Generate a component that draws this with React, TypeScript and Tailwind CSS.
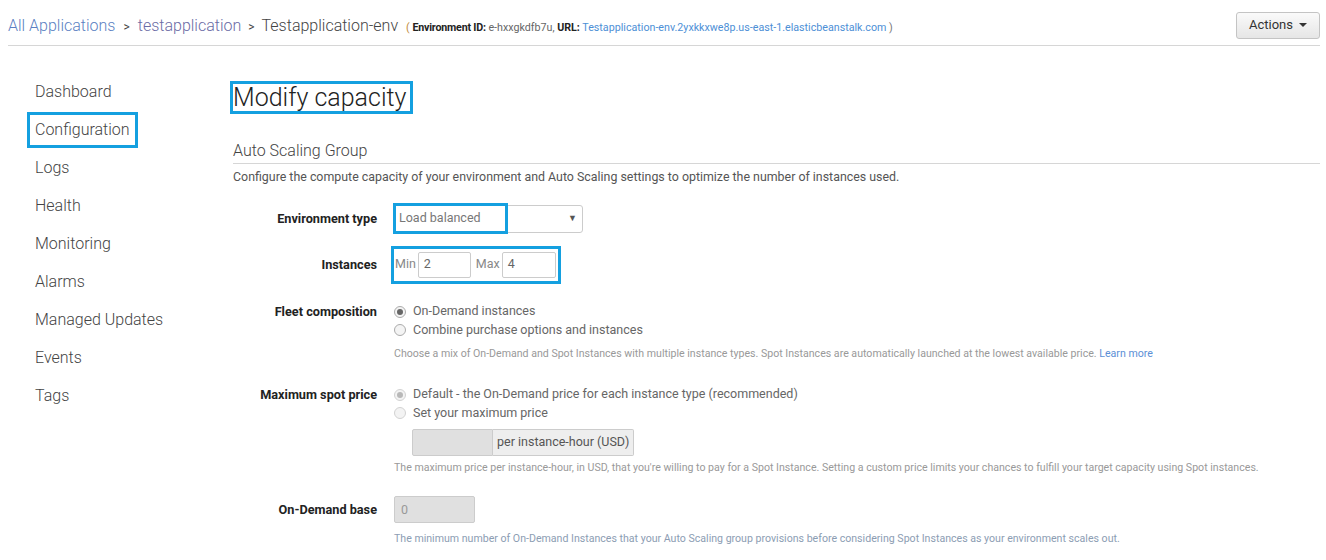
import React from "react";

const font = { fontFamily: "Roboto, 'Liberation Sans', sans-serif" };

function Radio({ checked, disabled }: { checked?: boolean; disabled?: boolean }) {
  return (
    <span
      className={`inline-flex items-center justify-center w-[12px] h-[12px] rounded-full border ${
        disabled ? "border-[#d2d2d2] bg-[#f3f3f3]" : "border-[#ababab] bg-[#f4f4f4]"
      }`}
    >
      {checked && (
        <span className={`w-[6px] h-[6px] rounded-full ${disabled ? "bg-[#b8b8b8]" : "bg-[#666]"}`} />
      )}
    </span>
  );
}

export default function App() {
  const nav = ["Dashboard", "Configuration", "Logs", "Health", "Monitoring", "Alarms", "Managed Updates", "Events", "Tags"];
  return (
    <div className="w-[1326px] h-[560px] bg-white overflow-hidden text-[#555]" style={font}>
      {/* Header */}
      <div className="ml-2 mr-[6px] flex items-center justify-between h-[46px] pt-[6px] border-b border-[#d6d6d6]">
        <div className="flex items-baseline text-[16px] leading-none font-light">
          <span className="text-[#5b7fc2]">All Applications</span>
          <span className="mx-[8px] text-[#444] text-[12px] font-normal">&gt;</span>
          <span className="text-[#6b6ba5]">testapplication</span>
          <span className="mx-[7px] text-[#444] text-[12px] font-normal">&gt;</span>
          <span className="text-[#444]">Testapplication-env</span>
          <span className="ml-[8px] text-[10.7px] text-[#222] font-normal">
            <span className="text-[#c08a3a]">( </span>
            <b className="font-bold tracking-[-0.2px]">Environment ID:</b>{" "}
            <span className="text-[#666]">e-hxxgkdfb7u,</span> <b className="font-bold">URL:</b>{" "}
            <span className="text-[#4d8fd6]">Testapplication-env.2yxkkxwe8p.us-east-1.elasticbeanstalk.com</span>
            <span className="text-[#777]"> )</span>
          </span>
        </div>
        <button className="h-[27px] px-[12px] rounded-[3px] border border-[#c4c4c4] bg-gradient-to-b from-[#fafafa] to-[#e6e6e6] text-[13px] text-[#333] flex items-center gap-[6px] -mt-[1px]">
          Actions
          <span className="w-0 h-0 border-l-[4px] border-r-[4px] border-t-[4px] border-l-transparent border-r-transparent border-t-[#333]" />
        </button>
      </div>

      <div className="flex">
        {/* Sidebar */}
        <div className="w-[225px] shrink-0 pl-[27px] pt-[27px]">
          {nav.map((n) => (
            <div key={n} className="h-[38px] flex items-center">
              <span
                className={`text-[16px] leading-none font-light text-[#444] ${
                  n === "Configuration" ? "border-[3px] border-[#14a0e0] px-[5px] py-[7px]" : "px-[8px]"
                }`}
              >
                {n}
              </span>
            </div>
          ))}
        </div>

        {/* Main */}
        <div className="flex-1 pl-[8px] pr-[6px]">
          <div className="mt-[35px] -ml-[3px] inline-block border-[3px] border-[#14a0e0] text-[25px] font-light leading-[27px] text-[#222] pr-[4px]">
            Modify capacity
          </div>
          <div className="mt-[25px] text-[16px] font-light text-[#444] pb-0 border-b border-[#d6d6d6]">
            Auto Scaling Group
          </div>
          <div className="mt-[4px] text-[12.4px] text-[#555]">
            Configure the compute capacity of your environment and Auto Scaling settings to optimize the number of instances used.
          </div>

          {/* Environment type */}
          <div className="flex items-center mt-[18px]">
            <div className="w-[144px] text-right text-[12.7px] font-bold text-[#222]">Environment type</div>
            <div className="ml-[16px] relative w-[190px] h-[28px] border border-[#ccc] rounded-[3px] flex items-center justify-end pr-[5px]">
              <span className="text-[9px] text-[#555]">▼</span>
              <div className="absolute -left-[1px] -top-[3px] w-[115px] h-[31px] border-[3px] border-[#14a0e0] flex items-center pl-[3px] text-[12.5px] text-[#777]">
                Load balanced
              </div>
            </div>
          </div>

          {/* Instances */}
          <div className="flex items-center mt-[13px]">
            <div className="w-[144px] text-right text-[12.7px] font-bold text-[#222]">Instances</div>
            <div className="ml-[14px] border-[3px] border-[#14a0e0] h-[38px] flex items-center pl-[1px] pr-[2px] text-[12.5px] text-[#888]">
              <span>Min</span>
              <div className="ml-[2px] w-[53px] h-[26px] border border-[#ccc] rounded-[2px] flex items-center pl-[5px] text-[#666]">2</div>
              <span className="ml-[5px]">Max</span>
              <div className="ml-[2px] w-[54px] h-[26px] border border-[#ccc] rounded-[2px] flex items-center pl-[5px] text-[#666]">4</div>
            </div>
          </div>

          {/* Fleet composition */}
          <div className="flex mt-[19px]">
            <div className="w-[144px] text-right text-[12.7px] font-bold text-[#222] leading-[18px]">Fleet composition</div>
            <div className="ml-[17px] text-[12.5px]">
              <div className="flex items-center gap-[7px] h-[18px]">
                <Radio checked />
                <span className="text-[#666]">On-Demand instances</span>
              </div>
              <div className="flex items-center gap-[7px] h-[19px]">
                <Radio />
                <span className="text-[#666]">Combine purchase options and instances</span>
              </div>
              <div className="mt-[6px] text-[10.6px] text-[#999]">
                Choose a mix of On-Demand and Spot Instances with multiple instance types. Spot Instances are automatically launched at the lowest available price.{" "}
                <span className="text-[#5b8fd6]">Learn more</span>
              </div>
            </div>
          </div>

          {/* Maximum spot price */}
          <div className="flex mt-[24px]">
            <div className="w-[144px] text-right text-[12.7px] font-bold text-[#222] leading-[18px]">Maximum spot price</div>
            <div className="ml-[17px] text-[12.5px]">
              <div className="flex items-center gap-[7px] h-[18px]">
                <Radio checked disabled />
                <span className="text-[#666]">Default - the On-Demand price for each instance type (recommended)</span>
              </div>
              <div className="flex items-center gap-[7px] h-[19px]">
                <Radio disabled />
                <span className="text-[#666]">Set your maximum price</span>
              </div>
              <div className="mt-[6px] ml-[18px] flex h-[27px]">
                <div className="w-[81px] bg-[#e0e0e0] border border-[#ccc] rounded-l-[2px]" />
                <div className="px-[4px] border border-l-0 border-[#ccc] rounded-r-[2px] bg-[#eeeeee] flex items-center text-[12.5px] text-[#555]">
                  per instance-hour (USD)
                </div>
              </div>
              <div className="mt-[4px] text-[10.6px] text-[#999]">
                The maximum price per instance-hour, in USD, that you're willing to pay for a Spot Instance. Setting a custom price limits your chances to fulfill your target capacity using Spot instances.
              </div>
            </div>
          </div>

          {/* On-Demand base */}
          <div className="flex mt-[21px]">
            <div className="w-[144px] text-right text-[12.7px] font-bold text-[#222] leading-[27px]">On-Demand base</div>
            <div className="ml-[17px] text-[12.5px]">
              <div className="w-[81px] h-[27px] bg-[#e0e0e0] border border-[#ccc] rounded-[2px] flex items-center pl-[6px] text-[#999]">0</div>
              <div className="mt-[8px] text-[10.6px] text-[#8c9db3]">
                The minimum number of On-Demand Instances that your Auto Scaling group provisions before considering Spot Instances as your environment scales out.
              </div>
            </div>
          </div>
        </div>
      </div>
    </div>
  );
}
